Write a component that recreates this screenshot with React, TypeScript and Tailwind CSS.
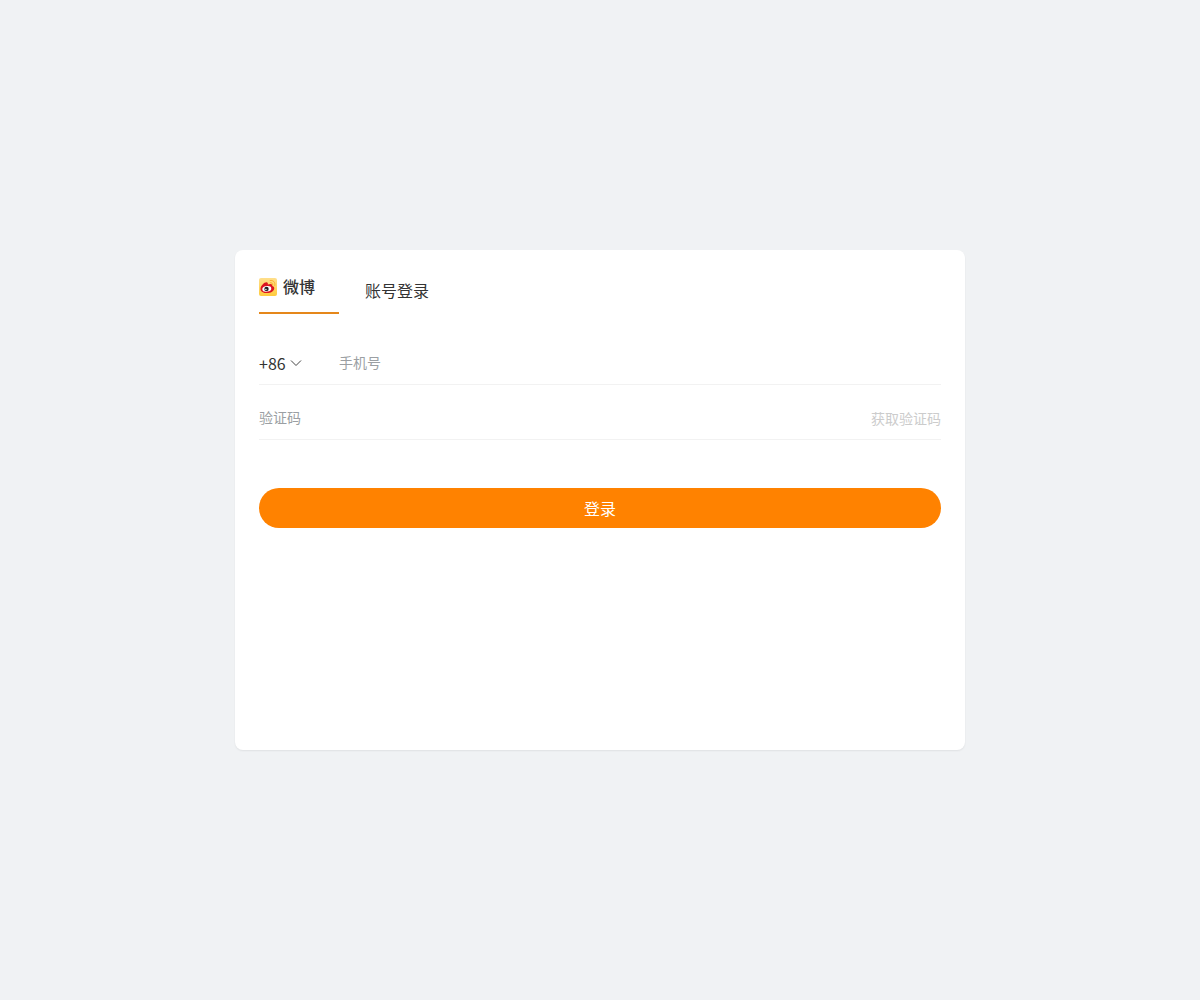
import { useState } from "react";

function WeiboIcon() {
  return (
    <svg viewBox="0 0 18 18" className="h-[18px] w-[18px] shrink-0" aria-hidden="true">
      <defs>
        <linearGradient id="weibo-bg" x1="0" y1="0" x2="0" y2="1">
          <stop offset="0" stopColor="#ffdf8c" />
          <stop offset="1" stopColor="#ffcb3d" />
        </linearGradient>
      </defs>
      <rect width="18" height="18" rx="2" fill="url(#weibo-bg)" />
      <path
        d="M1.500 10.900C1.500 7.900 5.200 4.300 7.400 4.300c1.400 0 1.700 1.100 1.400 2.200 2.600-1.100 4.900-.7 4.500 1.500 1.500.5 2.200 1.500 1.900 2.800-.5 2.700-3.600 4.300-7.100 4.300s-6.600-1.600-6.600-4.200z"
        fill="#dc1420"
      />
      <ellipse cx="7.800" cy="10.800" rx="4.500" ry="2.800" fill="#fff" transform="rotate(-8 7.800 10.800)" />
      <circle cx="7.500" cy="10.900" r="2.200" fill="#222" />
      <circle cx="6.900" cy="11.400" r=".7" fill="#fff" />
      <path d="M11.200 2.500c3.200-.5 5.200 1.700 4.600 4.900M11.300 4.700c1.600-.3 2.600.8 2.300 2.300" fill="none" stroke="#fbb030" strokeWidth="1" strokeLinecap="round" />
    </svg>
  );
}

export default function App() {
  const [phone, setPhone] = useState("");
  const [code, setCode] = useState("");

  return (
    <main className="flex h-screen items-center justify-center bg-[#f0f2f4] font-['Noto_Sans_CJK_SC',sans-serif] text-[#333]">
      <section className="h-[500px] w-[730px] rounded-lg bg-white px-6 shadow-[0_1px_2px_rgba(0,0,0,0.07)]">
        {/* Tabs */}
        <div className="flex h-16 items-stretch">
          <button type="button" className="flex w-20 items-center gap-1.5 border-b-2 border-[#e5871a] pt-3 text-base font-medium">
            <WeiboIcon />
            <span className="pb-0.5">微博</span>
          </button>
          <button type="button" className="ml-[26px] pt-4 text-base">
            账号登录
          </button>
        </div>

        {/* Phone */}
        <div className="mt-7 flex h-[43px] items-center border-b border-[#f2f2f2]">
          <button type="button" className="flex w-20 items-center gap-1 text-base">
            <span>+86</span>
            <svg viewBox="0 0 12 12" className="h-3 w-3" fill="none" stroke="#444" aria-hidden="true">
              <path d="M1 3.500l5 5 5-5" />
            </svg>
          </button>
          <input
            value={phone}
            onChange={(e) => setPhone(e.target.value)}
            placeholder="手机号"
            className="min-w-0 flex-1 pb-0.5 text-sm outline-none placeholder:text-[#9b9fa3]"
          />
        </div>

        {/* Verification code */}
        <div className="flex h-[55px] items-center border-b border-[#f2f2f2] pt-2.5">
          <input
            value={code}
            onChange={(e) => setCode(e.target.value)}
            placeholder="验证码"
            className="min-w-0 flex-1 text-sm outline-none placeholder:text-[#9b9fa3]"
          />
          <button type="button" className="pt-0.5 text-sm text-[#ccc]">
            获取验证码
          </button>
        </div>

        <button type="button" className="mt-12 h-10 w-full rounded-full bg-[#ff8200] text-base text-white">
          登录
        </button>
      </section>
    </main>
  );
}
